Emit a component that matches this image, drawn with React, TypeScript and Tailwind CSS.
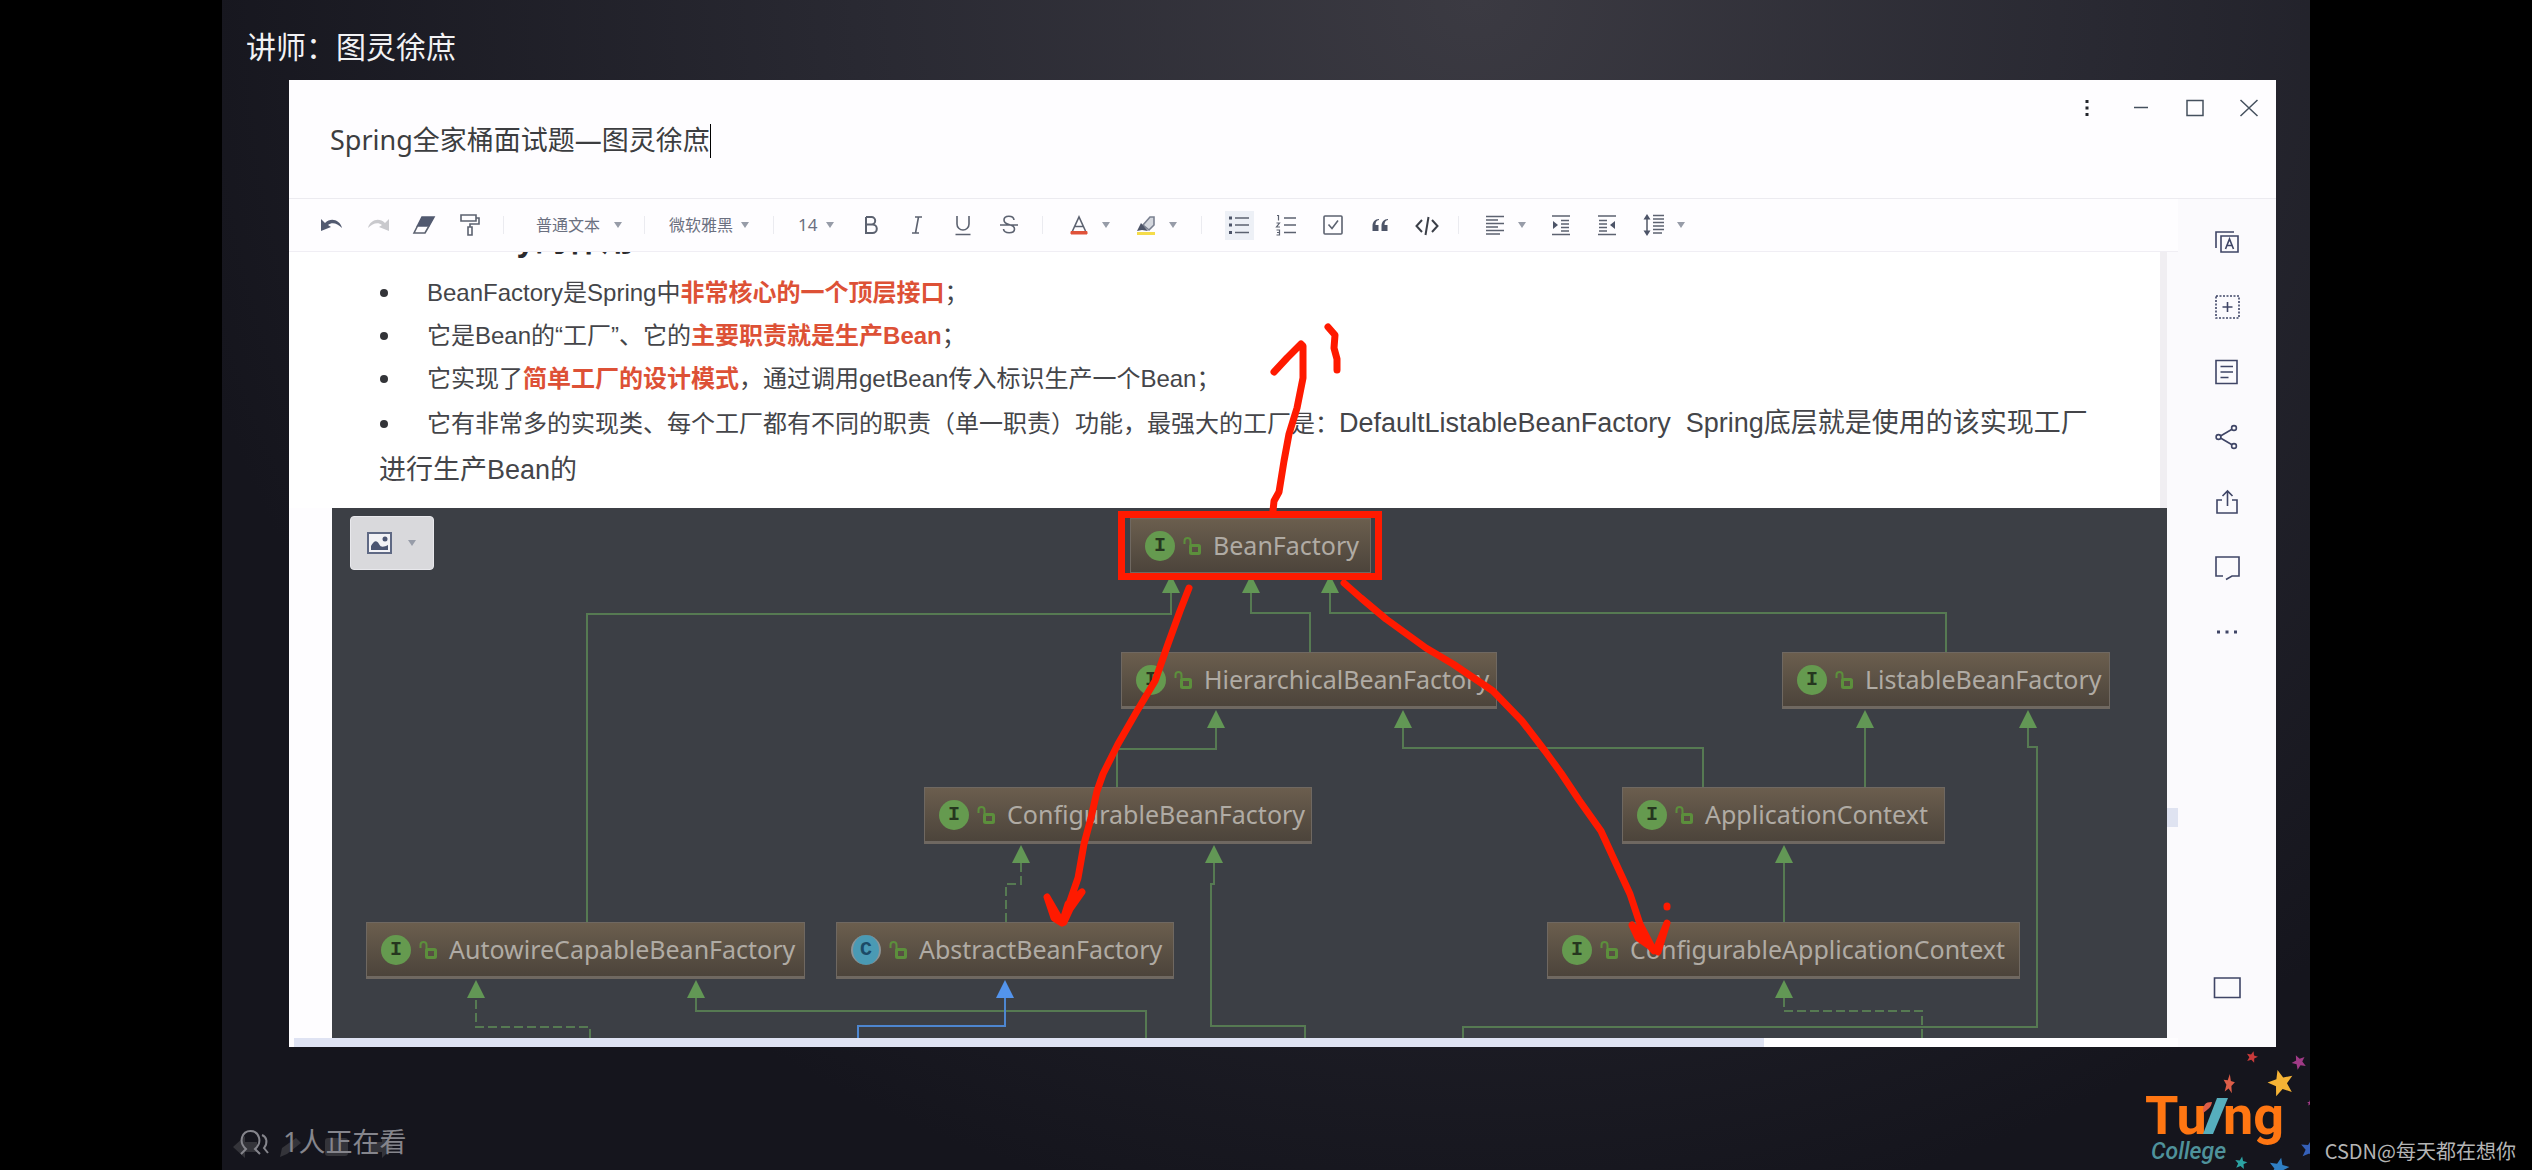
import type { ReactNode } from 'react'

type NodeItem = { name: string; kind: 'I' | 'C'; place: string }

const NODES: NodeItem[] = [
  { name: 'BeanFactory', kind: 'I', place: 'left-[798px] top-[10px] w-[241px]' },
  { name: 'HierarchicalBeanFactory', kind: 'I', place: 'left-[789px] top-[144px] w-[376px]' },
  { name: 'ListableBeanFactory', kind: 'I', place: 'left-[1450px] top-[144px] w-[328px]' },
  { name: 'ConfigurableBeanFactory', kind: 'I', place: 'left-[592px] top-[279px] w-[388px]' },
  { name: 'ApplicationContext', kind: 'I', place: 'left-[1290px] top-[279px] w-[323px]' },
  { name: 'AutowireCapableBeanFactory', kind: 'I', place: 'left-[34px] top-[414px] w-[439px]' },
  { name: 'AbstractBeanFactory', kind: 'C', place: 'left-[504px] top-[414px] w-[338px]' },
  { name: 'ConfigurableApplicationContext', kind: 'I', place: 'left-[1215px] top-[414px] w-[473px]' },
]

// each edge runs up into the parent, arrow tip is [x, y]
const EDGES = [
  { d: 'M255 414V106H839V84', tip: [839, 67] },
  { d: 'M978 144V105H919V84', tip: [919, 67] },
  { d: 'M1614 144V105H998V84', tip: [998, 67] },
  { d: 'M785 279V241H884V219', tip: [884, 202] },
  { d: 'M1371 279V240H1071V219', tip: [1071, 202] },
  { d: 'M1533 279V219', tip: [1533, 202] },
  { d: 'M1131 530V519H1705V239H1696V219', tip: [1696, 202] },
  { d: 'M1452 414V354', tip: [1452, 337] },
  { d: 'M1590 530V503H1452V490', tip: [1452, 472], dashed: true },
  { d: 'M674 414V376H689V354', tip: [689, 337], dashed: true },
  { d: 'M973 530V518H879V376H882V354', tip: [882, 337] },
  { d: 'M258 530V519H144V490', tip: [144, 472], dashed: true },
  { d: 'M814 530V503H364V490', tip: [364, 472] },
  { d: 'M526 530V518H673V490', tip: [673, 472], blue: true },
]

function Caret() {
  return (
    <svg width="8" height="6" viewBox="0 0 8 6" className="pointer-events-none shrink-0" fill="#979ca8">
      <path d="M0 0h8L4 6z" />
    </svg>
  )
}

function Divider({ className }: { className: string }) {
  return <span className={`h-[18px] w-px shrink-0 bg-[#ebebf0] ${className}`} />
}

function Tool({ label, active, children }: { label: string; active?: boolean; children: ReactNode }) {
  return (
    <button type="button" aria-label={label} className="flex w-[46px] shrink-0 justify-center">
      <span className={`flex h-[29px] w-[29px] items-center justify-center ${active ? 'bg-[#edf0f6]' : ''}`}>
        <svg width="24" height="24" viewBox="0 0 24 24" fill="none" stroke="#5c6270" strokeWidth="1.6">
          {children}
        </svg>
      </span>
    </button>
  )
}

function MenuTool({ label, className, children }: { label: string; className: string; children: ReactNode }) {
  return (
    <button type="button" aria-label={label} className={`flex shrink-0 items-center gap-[11px] ${className}`}>
      <svg width="24" height="24" viewBox="0 0 24 24" fill="none" stroke="#5c6270" strokeWidth="1.6">
        {children}
      </svg>
      <Caret />
    </button>
  )
}

function Toolbar() {
  return (
    <div className="flex h-[53px] items-center border-b border-[#f0eef4] bg-[#fefdff] pl-5 text-base text-[#6b7080]">
      <Tool label="撤销">
        <path d="M1 6v12l10-4-3-2c4-3 9-2 14 3-2-8-11-11-17-5z" fill="#525a70" stroke="none" />
      </Tool>
      <Tool label="重做">
        <path d="M23 6v12l-10-4 3-2c-4-3-9-2-14 3 2-8 11-11 17-5z" fill="#c9c9cd" stroke="none" />
      </Tool>
      <Tool label="清除格式">
        <path d="M10 4h12l-5 9H5.500z" fill="#525a70" stroke="#525a70" />
        <path d="M5.500 13L2 20h11l4-7" />
      </Tool>
      <Tool label="格式刷">
        <path d="M3 2h15v6H3zM18 5h3v6h-9v3M10 14h4v8h-4z" />
      </Tool>
      <Divider className="ml-2.5" />

      <label className="flex items-center gap-[14px] pl-8">
        <select aria-label="段落样式" className="w-16 appearance-none bg-transparent outline-none">
          <option>普通文本</option>
        </select>
        <Caret />
      </label>
      <Divider className="ml-[22px]" />
      <label className="flex items-center gap-2 pl-6">
        <select aria-label="字体" className="w-16 appearance-none bg-transparent outline-none">
          <option>微软雅黑</option>
        </select>
        <Caret />
      </label>
      <Divider className="ml-6" />
      <label className="flex items-center gap-2 pl-6">
        <select aria-label="字号" className="w-5 appearance-none bg-transparent text-[17px] outline-none">
          <option>14</option>
        </select>
        <Caret />
      </label>

      <span className="w-[14px] shrink-0" />
      <Tool label="加粗">
        <path d="M7 4v16h6.500a4.300 4.300 0 0 0 0-8.600H7M7 4h5.500a3.700 3.700 0 0 1 0 7.400" strokeWidth="2" />
      </Tool>
      <Tool label="斜体">
        <path d="M10 4h7M7 20h7M13.500 4l-3 16" />
      </Tool>
      <Tool label="下划线">
        <path d="M6 3v8a6 6 0 0 0 12 0V3M4.500 21.500h15" />
      </Tool>
      <Tool label="删除线">
        <path d="M17 7c-.5-5-10-5-10 0 0 3 3 4 5 4.500s5.500 1.500 5.500 4.500c0 5-10.500 5-11 0M3 12h18" />
      </Tool>
      <Divider className="ml-2.5" />

      <MenuTool label="文字颜色" className="ml-6">
        <path d="M5.500 18L12 4l6.500 14M8 13.500h8" />
        <path d="M4 18.500h16v2.500H4z" fill="#e0533a" stroke="#e0533a" strokeWidth="1" />
      </MenuTool>
      <MenuTool label="高亮" className="ml-6">
        <path d="M9 12l7-8h4v8l-5 5z" fill="#d4d7de" stroke="#7a8090" />
        <path d="M7 10l7 8-6-1-5 1z" fill="#4d5468" stroke="none" />
        <path d="M3 19h18v3H3z" fill="#f5dc4a" stroke="none" />
      </MenuTool>
      <Divider className="ml-6" />

      <div className="ml-[14px] flex shrink-0 gap-px">
        <Tool label="无序列表" active>
          <path d="M8 5h14M8 12h14M8 19.500h14" />
          <path d="M2 3.500h3v3H2zM2 10.500h3v3H2zM2 18h3v3H2z" fill="#4d5468" stroke="none" />
        </Tool>
        <Tool label="有序列表">
          <path d="M10 5h12M10 12h12M10 19.500h12" />
          <path d="M3 2.500h1.500v5M2.500 10h3l-3 4h3.500M2.500 17h3v5h-3M3 19.500h2.500" strokeWidth="1.200" />
        </Tool>
        <Tool label="任务列表">
          <rect x="3" y="3" width="18" height="18" rx="1" />
          <path d="M7.500 11.500l3.500 4 6-8" />
        </Tool>
        <Tool label="引用">
          <path
            d="M11 6C7 6 4.500 9 4.500 13v5h6v-6h-3c0-3 1-4.500 3.500-5zM20 6c-4 0-6.500 3-6.500 7v5h6v-6h-3c0-3 1-4.500 3.500-5z"
            fill="#4d5468"
            stroke="none"
          />
        </Tool>
        <Tool label="代码">
          <path d="M7 7l-5.500 6L7 19M17 7l5.500 6L17 19M13.500 4l-3 18" stroke="#3b3f48" strokeWidth="2" />
        </Tool>
      </div>
      <Divider className="ml-2" />

      <MenuTool label="对齐" className="ml-6">
        <path d="M3 3.500h18M3 7h12M3 10.500h18M3 14h12M3 17.500h18M3 21h14" />
      </MenuTool>
      <span className="w-3 shrink-0" />
      <Tool label="增加缩进">
        <path d="M3 3h18M12 7.500h8M12 11h8M12 14.500h8M12 18h8M3 21.500h18" />
        <path d="M4 8v8l5-4z" fill="#4d5468" stroke="none" />
      </Tool>
      <Tool label="减少缩进">
        <path d="M3 3h18M4 7.500h8M4 11h8M4 14.500h8M4 18h8M3 21.500h18" />
        <path d="M20 8v8l-5-4z" fill="#4d5468" stroke="none" />
      </Tool>
      <MenuTool label="行高" className="ml-3">
        <path d="M5 4v16M11 2.500h11M11 6h11M11 9.500h11M11 13h11M11 16.500h11M11 20h9" />
        <path d="M5 1L1.500 6.500h7zM5 23l-3.500-5.500h7z" fill="#4d5468" stroke="none" />
      </MenuTool>
    </div>
  )
}

function DiagramNode({ name, kind, place }: NodeItem) {
  return (
    <div
      className={`absolute flex h-[57px] items-center border border-b-[3px] border-[#6f6861] bg-linear-to-b from-[#6b5e4e] to-[#4c443b] pl-[14px] ${place}`}
    >
      <span
        className={
          kind === 'I'
            ? "flex h-[30px] w-[30px] shrink-0 items-center justify-center rounded-full bg-[#659a4f] font-['Liberation_Mono',monospace] text-xl font-bold text-[#26361f]"
            : "flex h-[30px] w-[30px] shrink-0 items-center justify-center rounded-full border-x-2 border-[#8d9496] bg-[#4a9ab4] font-['Liberation_Mono',monospace] text-xl font-bold text-[#1c4a66]"
        }
      >
        {kind}
      </span>
      <svg width="18" height="18" viewBox="0 0 18 18" className="ml-2 shrink-0" fill="none" stroke="#5c8f3c" strokeWidth="2">
        <path d="M1.500 7V4C1.500 0 7.500 0 7.500 4v5" />
        <rect x="7.500" y="8.500" width="9" height="8" rx="1" strokeWidth="3" />
      </svg>
      <span className="pl-3 text-[25px] whitespace-nowrap text-[#b0aba4]">{name}</span>
    </div>
  )
}

function Diagram() {
  return (
    <div className="relative ml-[43px] h-[530px] bg-[#3c3f45] font-['Noto_Sans',sans-serif]">
      <div className="absolute inset-0 overflow-hidden">
        <svg width="1835" height="530" className="absolute top-0 left-0" fill="none" strokeWidth="2">
          {EDGES.map(({ d, tip, dashed, blue }) => (
            <g key={d} stroke={blue ? '#4d86d0' : '#567a52'}>
              <path d={d} strokeDasharray={dashed ? '9 4' : undefined} />
              <path d={`M${tip[0]} ${tip[1]}l9 18h-18z`} fill={blue ? '#5394ec' : '#629755'} stroke="none" />
            </g>
          ))}
        </svg>
        {NODES.map((n) => (
          <DiagramNode key={n.name} {...n} />
        ))}
        <button
          type="button"
          aria-label="图片选项"
          className="absolute top-2 left-[18px] flex h-[54px] w-[84px] items-center gap-4 rounded-sm border border-[#e8e8ec] bg-[#d9d9dc] pl-4"
        >
          <svg width="25" height="22" viewBox="0 0 25 22" fill="none" stroke="#5f6984" strokeWidth="2">
            <rect x="1" y="1" width="23" height="20" fill="#f2f2f6" />
            <path d="M4 18v-4c3-6 6-6 8-2s5 3 9 1v5z" fill="#4b5572" stroke="none" />
            <circle cx="18" cy="7" r="2.500" fill="#4b5572" stroke="none" />
          </svg>
          <Caret />
        </button>
      </div>

      {/* Pen marks */}
      <svg
        width="1835"
        height="530"
        className="pointer-events-none absolute top-0 left-0 overflow-visible"
        fill="none"
        stroke="#ff1a00"
        strokeWidth="7"
        strokeLinecap="round"
        strokeLinejoin="round"
      >
        <rect x="789.5" y="6.500" width="257" height="62" strokeLinejoin="miter" />
        <path d="M941 3L942 -7L947 -16L952 -47L957 -74L965 -100L971 -130L971 -162L969 -164L955 -150L942 -136" />
        <path d="M996 -181L1003 -173L1002 -160L1005 -149L1005 -138" />
        <path d="M857 80L848 103L836 136L823 173L805 203L786 236L771 266L765 283L759 310L752 336L746 370L737 396L730 415L715 389L722 410L730 415L736 396L750 384L738 401L732 414" />
        <path d="M1012 75L1029 90L1054 111L1094 140L1121 156L1161 183L1190 213L1213 243L1229 265L1247 292L1269 323L1286 360L1298 386L1308 416L1322 443L1300 417L1306 430L1326 444L1335 415L1324 442" />
        <path d="M1335 398v1" />
      </svg>
    </div>
  )
}

function SideButton({ label, children }: { label: string; children: ReactNode }) {
  return (
    <button type="button" aria-label={label} className="flex h-[65px] w-full shrink-0 items-center justify-center">
      <svg width="28" height="28" viewBox="0 0 28 28" fill="none" stroke="#3f4566" strokeWidth="1.600">
        {children}
      </svg>
    </button>
  )
}

function Sidebar() {
  return (
    <aside className="flex w-[98px] shrink-0 flex-col items-center bg-[#fbfafd] pt-[10px] pb-[27px]">
      <SideButton label="样式">
        <path d="M3 20V4h18M8 8h17v16H8zM12.500 21l4-10 4 10M14 17.500h5" />
      </SideButton>
      <SideButton label="插入">
        <path d="M3 3h23v22H3z" strokeDasharray="2 1.500" />
        <path d="M14.500 9v10M9.500 14h10" />
      </SideButton>
      <SideButton label="目录">
        <path d="M3 2.500h21v23H3zM7.500 8.500H20M7.500 14H20M7.500 19.500h8" />
      </SideButton>
      <SideButton label="分享">
        <circle cx="5.500" cy="14" r="2.400" />
        <circle cx="21" cy="5" r="2.400" />
        <circle cx="21" cy="23" r="2.400" />
        <path d="M7.500 13L19 6.200M7.500 15L19 21.800" />
      </SideButton>
      <SideButton label="导出">
        <path d="M9 12H4v13h20V12h-5M14.500 18V3M9.500 8l5-5 5 5" />
      </SideButton>
      <SideButton label="评论">
        <path d="M10 23H3V4h23v19h-7l-6 3.500" />
      </SideButton>
      <SideButton label="更多">
        <path d="M4 14h3M12.500 14h3M21 14h3" strokeWidth="3" />
      </SideButton>
      <div className="grow" />
      <SideButton label="演示">
        <path d="M1.500 4h25.500v19.500H1.500z" />
      </SideButton>
    </aside>
  )
}

function WindowButton({ label, children }: { label: string; children: ReactNode }) {
  return (
    <button type="button" aria-label={label} className="flex h-[55px] w-[54px] items-center justify-center">
      <svg width="20" height="20" viewBox="0 0 20 20" fill="none" stroke="#45505e" strokeWidth="1.500">
        {children}
      </svg>
    </button>
  )
}

function Bullet() {
  return (
    <span className="inline-block w-12">
      <span className="mb-1 ml-px inline-block h-2 w-2 rounded-full bg-[#333438]" />
    </span>
  )
}

function Article() {
  return (
    <div className="overflow-hidden border-r-[7px] border-[#f0eef2] bg-white pr-[58px] pb-[14px] pl-[90px] font-['Liberation_Sans','Noto_Sans_CJK_SC',sans-serif] text-2xl text-[#444549]">
      <h2 className="-mt-8 -ml-11 text-[33px] leading-[40px] font-bold text-[#2b2b2e]">BeanFactory的作用</h2>
      <ul className="mt-[11px] leading-[43px]">
        <li>
          <Bullet />
          BeanFactory是Spring中<strong className="text-[#dd5136]">非常核心的一个顶层接口</strong>；
        </li>
        <li>
          <Bullet />
          它是Bean的“工厂”、它的<strong className="text-[#dd5136]">主要职责就是生产Bean</strong>；
        </li>
        <li>
          <Bullet />
          它实现了<strong className="text-[#dd5136]">简单工厂的设计模式</strong>，通过调用getBean传入标识生产一个Bean；
        </li>
        <li className="leading-[46px]">
          <Bullet />
          它有非常多的实现类、每个工厂都有不同的职责（单一职责）功能，最强大的工厂是：
          <span className="text-[27px]">DefaultListableBeanFactory&nbsp; Spring底层就是使用的该实现工厂进行生产Bean的</span>
        </li>
      </ul>
    </div>
  )
}

function EditorWindow() {
  return (
    <section className="flex flex-col bg-[#fefdff]">
      <header className="flex h-[119px] justify-between border-b border-[#ecebf0] pl-[41px]">
        <div className="flex items-center pt-[3px]">
          <input
            aria-label="标题"
            defaultValue="Spring全家桶面试题—图灵徐庶"
            className="field-sizing-content bg-transparent text-[27px] text-[#3c3d40] outline-none"
          />
          <span className="h-[34px] w-px bg-black" />
        </div>
        <div className="flex items-start">
          <WindowButton label="菜单">
            <path d="M10 2v3M10 8.500v3M10 15v3" stroke="#22252b" strokeWidth="3" />
          </WindowButton>
          <WindowButton label="最小化">
            <path d="M3 9.500h14" />
          </WindowButton>
          <WindowButton label="最大化">
            <path d="M2 2.500h16v15H2z" />
          </WindowButton>
          <WindowButton label="关闭">
            <path d="M1.500 2l17 16M18.500 2l-17 16" />
          </WindowButton>
        </div>
      </header>

      <div className="flex">
        <div className="flex min-w-0 grow flex-col">
          <Toolbar />
          <div className="flex">
            <div className="min-w-0 grow">
              <Article />
              <Diagram />
            </div>
            <div className="w-[11px] shrink-0 bg-[#fbfafd]">
              <div className="mt-[556px] h-[19px] bg-[#dfe3f1]" />
            </div>
          </div>
          <div className="h-[9px] pl-[5px]">
            <div className="h-full w-[78%] bg-[#dfe3f3]" />
          </div>
        </div>
        <Sidebar />
      </div>
    </section>
  )
}

const STAR = 'M0 -10L2.600 -3.500L9.500 -3L4.200 1.400L6 8.500L0 4.600L-6 8.500L-4.200 1.400L-9.500 -3L-2.600 -3.500Z'

function Logo() {
  return (
    <svg width="168" height="124" viewBox="0 0 168 124" className="shrink-0 font-['Roboto',sans-serif]">
      <path d={STAR} fill="#c83a3a" transform="translate(110 10) scale(.6) rotate(15)" />
      <path d={STAR} fill="#a03a86" transform="translate(157 15) scale(.75) rotate(-25)" />
      <path d={STAR} fill="#dd5d48" transform="translate(87 37) scale(.6 1) rotate(8)" />
      <path d={STAR} fill="#f5b335" transform="translate(139 36) scale(1.350) rotate(-15)" />
      <path d={STAR} fill="#a03a86" transform="translate(168 56) scale(.3)" />
      <path d={STAR} fill="#3560b8" transform="translate(168 102) scale(1) rotate(10)" />
      <path d={STAR} fill="#2ba3a3" transform="translate(99 116) scale(.65) rotate(10)" />
      <path d={STAR} fill="#2f7fc4" transform="translate(137 121) scale(1.050) rotate(12)" />
      <text x="3" y="87" fontSize="54" fontWeight="700" fill="#ff7612">
        Tu
      </text>
      <path d="M61 66c0-8 2-11 9-11-1 6-4 7-9 11z" fill="#dd5d48" />
      <path d="M75 51h11L71 87H61z" fill="#56aebd" />
      <text x="81" y="87" fontSize="54" fontWeight="700" fill="#ff7612">
        ng
      </text>
      <text x="9" y="112" fontSize="23" fontStyle="italic" fontWeight="500" fill="#4f929b">
        College
      </text>
    </svg>
  )
}

function Footer() {
  return (
    <footer className="relative flex h-[124px] justify-between pl-[18px]">
      {/* Slideshow controls showing faintly behind the viewer count */}
      <svg width="160" height="24" viewBox="0 0 160 24" className="absolute bottom-3 left-[11px]" fill="#34343a">
        <path d="M0 12L12 1v6h12v10H12v6z" />
        <path d="M47 22l2-9L63 3l5 5-14 11z" />
        <rect x="92" y="3" width="23" height="18" rx="3" />
        <path d="M160 12L149 1v6h-12v10h12v6z" />
      </svg>
      <div className="relative mt-[75px] flex h-10 items-center gap-[14px] text-[27px] text-[#85858c]">
        <svg width="29" height="26" viewBox="0 0 29 26" fill="none" stroke="#85858c" strokeWidth="2">
          <path d="M1 25l5-5C-2 13 2 2 10.500 2S23 13 15 20l5 5" />
          <path d="M22 6c5 2 6 8 2 13l4 5" />
        </svg>
        <span>1人正在看</span>
      </div>
      <Logo />
    </footer>
  )
}

export default function App() {
  return (
    <div className="relative min-h-screen bg-black px-[222px] font-['Noto_Sans','Noto_Sans_CJK_SC',sans-serif]">
      <main className="min-h-screen bg-[#15151d] bg-[radial-gradient(ellipse_at_60%_0%,#3b3a42_0%,#292932_35%,#15151d_75%)]">
        <div className="flex h-20 items-center pt-3 pl-6">
          <h1 className="text-[30px] text-[#f2f2f4]">讲师：图灵徐庶</h1>
        </div>
        <div className="pr-[34px] pl-[67px]">
          <EditorWindow />
        </div>
        <Footer />
      </main>
      <p className="absolute right-4 bottom-1.5 font-['Noto_Sans_CJK_SC',sans-serif] text-xl text-[#b4b4b4]">CSDN@每天都在想你</p>
    </div>
  )
}
